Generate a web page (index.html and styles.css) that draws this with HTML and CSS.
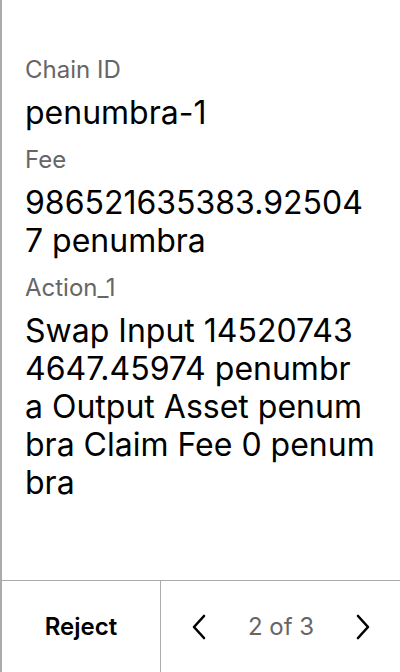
FILE: index.html
```html
<!DOCTYPE html>
<html>
<head>
<meta charset="utf-8">
<link rel="stylesheet" href="styles.css">
</head>
<body>
<div class="screen">
  <div class="content">
    <div class="field">
      <div class="label">Chain ID</div>
      <div class="value">penumbra-1</div>
    </div>
    <div class="field">
      <div class="label">Fee</div>
      <div class="value">986521635383.92504<br>7 penumbra</div>
    </div>
    <div class="field">
      <div class="label">Action_1</div>
      <div class="value">Swap Input 14520743<br>4647.45974 penumbr<br>a Output Asset penum<br>bra Claim Fee 0 penum<br>bra</div>
    </div>
  </div>
  <div class="footer">
    <div class="reject">Reject</div>
    <div class="nav">
      <svg class="chev" width="16" height="26" viewBox="0 0 16 26"><path d="M13 2 L3 13 L13 24" fill="none" stroke="#000" stroke-width="2.6" stroke-linecap="round" stroke-linejoin="round"/></svg>
      <span class="pages">2 of 3</span>
      <svg class="chev" width="16" height="26" viewBox="0 0 16 26"><path d="M3 2 L13 13 L3 24" fill="none" stroke="#000" stroke-width="2.6" stroke-linecap="round" stroke-linejoin="round"/></svg>
    </div>
  </div>
</div>
</body>
</html>
```

FILE: styles.css
```css
html, body {
  margin: 0;
  padding: 0;
  background: #fff;
}
.screen {
  width: 400px;
  height: 672px;
  box-sizing: border-box;
  border-left: 2px solid #ababab;
  display: flex;
  flex-direction: column;
  font-family: Inter, "Noto Sans", sans-serif;
  color: #000;
}
.content {
  flex: 1;
  padding: 54px 25px 0 23px;
  display: flex;
  flex-direction: column;
  gap: 12px;
}
.field {
  display: flex;
  flex-direction: column;
  gap: 8px;
}
.label {
  font-size: 24px;
  line-height: 32px;
  color: #666;
}
.value {
  font-size: 32px;
  line-height: 38px;
  white-space: nowrap;
}
.footer {
  height: 92px;
  flex: none;
  border-top: 1px solid #ababab;
  display: flex;
  box-sizing: border-box;
}
.reject {
  width: 158px;
  border-right: 1px solid #ababab;
  display: flex;
  align-items: center;
  justify-content: center;
  font-size: 24px;
  font-weight: 600;
}
.nav {
  flex: 1;
  display: flex;
  align-items: center;
  justify-content: space-between;
  padding: 0 29px 0 30px;
}
.pages {
  font-size: 24px;
  color: #666;
}
.chev {
  display: block;
}
```
